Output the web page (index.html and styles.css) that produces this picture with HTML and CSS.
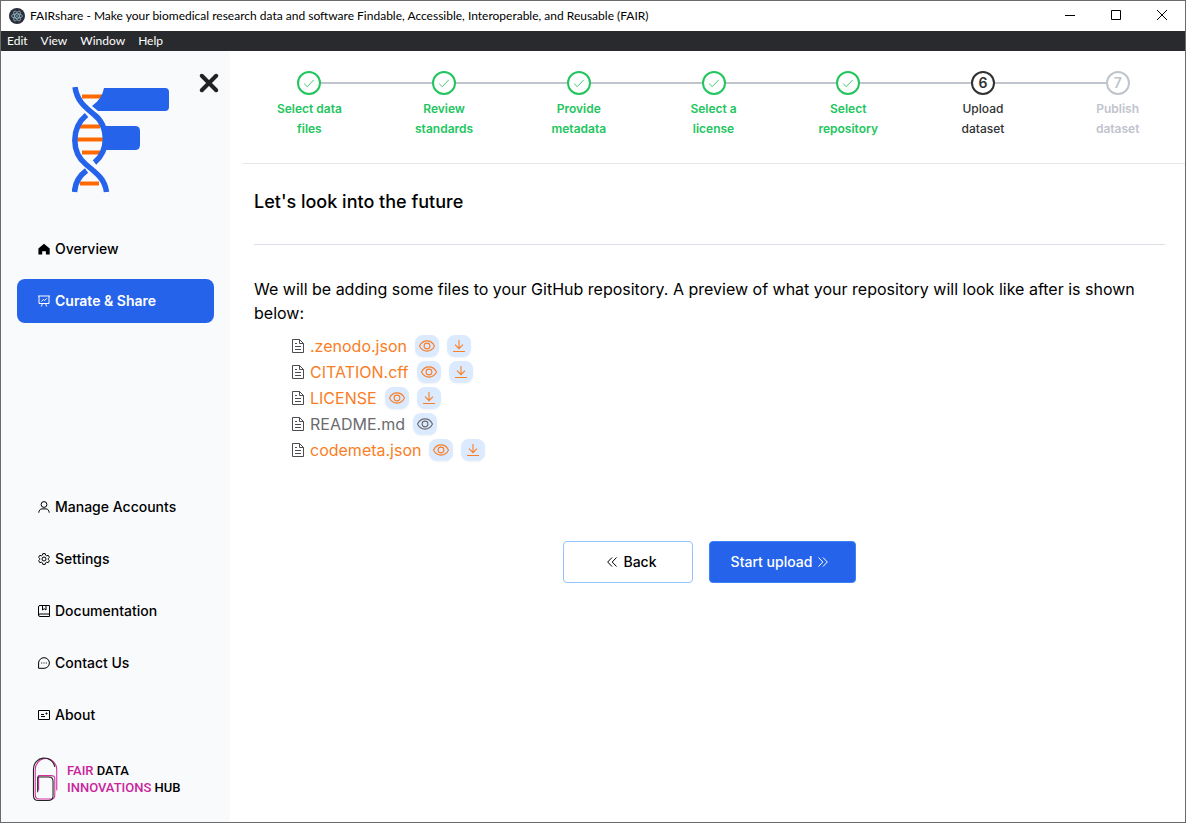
FILE: index.html
```html
<!DOCTYPE html>
<html lang="en">
<head>
<meta charset="utf-8">
<title>FAIRshare</title>
<link rel="stylesheet" href="styles.css">
</head>
<body>
<svg class="defs" aria-hidden="true">
  <symbol id="check" viewBox="0 0 16 16"><path d="M2.500 8.800 6 12.200 13.500 4.400" fill="none" stroke="currentColor"/></symbol>
  <symbol id="file" viewBox="0 0 14 16"><path d="M1.500 1.500h7l4 4v9h-11zM8.500 1.500v4h4M4 5.500h2M4 8.500h6M4 11.500h6" fill="none" stroke="currentColor"/></symbol>
  <symbol id="eye" viewBox="0 0 18 18"><path d="M1.500 9C3 6 5.800 3.900 9 3.900S15 6 16.500 9C15 12 12.200 14.100 9 14.100S3 12 1.500 9z" fill="none" stroke="currentColor" stroke-width="1.100"/><circle cx="9" cy="9" r="2.900" fill="none" stroke="currentColor" stroke-width="1.100"/></symbol>
  <symbol id="download" viewBox="0 0 18 18"><path d="M9 3v8.500M5 7.700l4 4 4-4M3 14.500h12" fill="none" stroke="currentColor" stroke-width="1.100"/></symbol>
</svg>
<div class="window">
  <header class="titlebar">
    <svg class="app-icon" viewBox="0 0 16 16"><circle cx="8" cy="8" r="8" fill="#2b2e3a"/><g fill="none" stroke="#9fc9d4" stroke-width=".7"><ellipse cx="8" cy="8" rx="5.500" ry="2.200"/><ellipse cx="8" cy="8" rx="5.500" ry="2.200" transform="rotate(60 8 8)"/><ellipse cx="8" cy="8" rx="5.500" ry="2.200" transform="rotate(120 8 8)"/></g><circle cx="8" cy="8" r=".8" fill="#9feaf9"/></svg>
    <span class="app-title">FAIRshare - Make your biomedical research data and software Findable, Accessible, Interoperable, and Reusable (FAIR)</span>
    <div class="window-controls">
      <button aria-label="Minimize"><svg viewBox="0 0 10 10"><path d="M0 5.500h10"/></svg></button>
      <button aria-label="Maximize"><svg viewBox="0 0 10 10"><path d="M.5.500h9v9h-9z"/></svg></button>
      <button aria-label="Close"><svg viewBox="0 0 10 10"><path d="M0 0l10 10M10 0L0 10"/></svg></button>
    </div>
  </header>
  <nav class="menubar" aria-label="Application menu">
    <button>Edit</button><button>View</button><button>Window</button><button>Help</button>
  </nav>
  <div class="body">
    <aside class="sidebar">
      <div class="brand">
        <svg class="logo" viewBox="0 0 98 106">
          <g stroke="#ff6a00" stroke-width="4"><path d="M10 9.500h22M7 39.500h21M5 52.500h29M10 65.500h20M8 96.500h19"/></g>
          <path d="M32 1h61q4 0 4 4v15q0 4-4 4H26l-6-5q10-7 12-18zM33 39h30q5 0 5 5v14q0 5-5 5H34z" fill="#2563eb"/>
          <g fill="none" stroke="#2563eb" stroke-width="5.500"><path d="M14.500 28C-1 41-1 65 14 77.500C27 88 33 93 34.500 105"/><path d="M3 0C5 14 13 20 22 27.500C37 39 37 64 22.500 75.500"/><path d="M14.500 83.500C7 89 3 96 2.500 105"/></g>
        </svg>
        <button class="collapse" aria-label="Close menu"><svg viewBox="0 0 20 20"><path d="M4 4l12 12M16 4L4 16" stroke="#222" stroke-width="3.400" stroke-linecap="round"/></svg></button>
      </div>
      <nav class="nav" aria-label="Main">
        <a href="#"><svg viewBox="0 0 12 12"><path d="M6 .7 11.700 5.500v6H7.900V8.200H4.200v3.300H.4v-6z" fill="currentColor" stroke="none"/></svg>Overview</a>
        <a href="#" class="active" aria-current="page"><svg viewBox="0 0 12 12"><path d="M0 1h12M1 1v7.500h10V1M3.500 6.500 5.300 4.500l1.300 1L8.800 3.300M3.300 11.500l1.200-3M8.700 11.500l-1.200-3"/></svg>Curate &amp; Share</a>
      </nav>
      <nav class="nav nav-bottom" aria-label="Secondary">
        <a href="#"><svg viewBox="0 0 12 12"><circle cx="6" cy="3.500" r="2.900"/><path d="M.8 11.700c0-2.200 1.400-3.800 3.200-3.800h4c1.800 0 3.200 1.600 3.200 3.800"/></svg>Manage Accounts</a>
        <a href="#"><svg viewBox="0 0 12 12"><circle cx="6" cy="6" r="2"/><path d="M4.800.6h2.400l.4 1.600 1 .6 1.600-.5 1.200 2.100L10.200 5.500v1l1.200 1.100-1.200 2.100-1.600-.5-1 .6-.4 1.600H4.800l-.4-1.600-1-.6-1.600.5L.6 7.600l1.200-1.100v-1L.6 4.400l1.200-2.100 1.600.5 1-.6z"/></svg>Settings</a>
        <a href="#"><svg viewBox="0 0 12 12"><path d="M11.500 9V.5H2Q.5.500.5 2v8q0 1.500 1.500 1.500h9.500V9H2Q.5 9 .5 10.200M4.500.5V5L6.200 3.700 8 5V.5"/></svg>Documentation</a>
        <a href="#"><svg viewBox="0 0 12 12"><path d="M.6 11.300V6a5.400 5.300 0 1 1 5.400 5.300z"/><path d="M3.200 6h1M5.500 6h1M7.800 6h1"/></svg>Contact Us</a>
        <a href="#"><svg viewBox="0 0 12 12"><path d="M.5 1.500h11v9H.5zM3 5.500h3M3 7.500h4M7.500 4.500h2M8.500 3.500v2"/></svg>About</a>
      </nav>
      <div class="hub">
        <svg viewBox="0 0 26 46"><g fill="none" stroke-width="1.100"><path d="M24.500 34V13a11 11.500 0 0 0-22 0v25q0 5 4 5h12q4 0 4-4V22q0-3-4-3H6v15" stroke="#d12f9e"/><path d="M22.500 10A11 11 0 0 0 .7 12v27q0 5.500 5 5.500h10q5 0 5-5V25q0-4.500-4.500-4.500H5V36" stroke="#222"/></g></svg>
        <p><span>FAIR</span> DATA<br><span>INNOVATIONS</span> HUB</p>
      </div>
    </aside>
    <main class="main">
      <ol class="steps">
        <li class="done"><span class="dot"><svg><use href="#check"/></svg></span><span class="label">Select data files</span></li>
        <li class="done"><span class="dot"><svg><use href="#check"/></svg></span><span class="label">Review standards</span></li>
        <li class="done"><span class="dot"><svg><use href="#check"/></svg></span><span class="label">Provide metadata</span></li>
        <li class="done"><span class="dot"><svg><use href="#check"/></svg></span><span class="label">Select a license</span></li>
        <li class="done"><span class="dot"><svg><use href="#check"/></svg></span><span class="label">Select repository</span></li>
        <li class="current" aria-current="step"><span class="dot">6</span><span class="label">Upload dataset</span></li>
        <li><span class="dot">7</span><span class="label">Publish dataset</span></li>
      </ol>
      <section class="content">
        <h1>Let's look into the future</h1>
        <p>We will be adding some files to your GitHub repository. A preview of what your repository will look like after is shown below:</p>
        <ul class="files">
          <li><svg class="file"><use href="#file"/></svg><span>.zenodo.json</span><button aria-label="Preview"><svg><use href="#eye"/></svg></button><button aria-label="Download"><svg><use href="#download"/></svg></button></li>
          <li><svg class="file"><use href="#file"/></svg><span>CITATION.cff</span><button aria-label="Preview"><svg><use href="#eye"/></svg></button><button aria-label="Download"><svg><use href="#download"/></svg></button></li>
          <li><svg class="file"><use href="#file"/></svg><span>LICENSE</span><button aria-label="Preview"><svg><use href="#eye"/></svg></button><button aria-label="Download"><svg><use href="#download"/></svg></button></li>
          <li class="existing"><svg class="file"><use href="#file"/></svg><span>README.md</span><button aria-label="Preview"><svg><use href="#eye"/></svg></button></li>
          <li><svg class="file"><use href="#file"/></svg><span>codemeta.json</span><button aria-label="Preview"><svg><use href="#eye"/></svg></button><button aria-label="Download"><svg><use href="#download"/></svg></button></li>
        </ul>
        <div class="actions">
          <button class="back"><svg viewBox="0 0 10 10"><path d="M5 .5.700 5 5 9.500M9.500.5 5.200 5l4.300 4.500"/></svg>Back</button>
          <button class="primary">Start upload<svg viewBox="0 0 10 10"><path d="M5 .5 9.300 5 5 9.500M.5.500 4.800 5 .5 9.500"/></svg></button>
        </div>
      </section>
    </main>
  </div>
</div>
</body>
</html>
```
FILE: styles.css
```css
* { box-sizing: border-box; }
body { margin: 0; background: #fff; color: #000; font: 16px/24px Inter, "Liberation Sans", sans-serif; }
button { font: inherit; color: inherit; border: 0; background: none; padding: 0; cursor: pointer; }
svg { display: block; flex: none; }
.defs { display: none; }
.window { display: flex; flex-direction: column; min-height: 100vh; border: 1px solid #6b6b6e; }

.titlebar { display: flex; align-items: center; height: 30px; padding-left: 8px; gap: 5px; font: 12px/16px Lato, "Noto Sans", sans-serif; }
.app-icon { width: 16px; height: 16px; }
.app-title { flex: 1; white-space: nowrap; overflow: hidden; }
.window-controls { display: flex; align-self: stretch; }
.window-controls button { display: grid; place-items: center; width: 46px; padding-bottom: 2px; }
.window-controls svg { width: 10px; height: 10px; fill: none; stroke: #000; overflow: visible; }
.menubar { display: flex; gap: 13px; height: 20px; padding: 0 6px; background: #292a2d; color: #fff; font: 12px/20px Lato, "Noto Sans", sans-serif; }

.body { display: flex; flex: 1; }
.sidebar { display: flex; flex-direction: column; flex: none; width: 229px; padding: 0 16px 20px; background: #f9fafc; }
.brand { display: flex; justify-content: space-between; align-items: flex-start; height: 176px; padding: 20px 0 0 55px; }
.logo { width: 98px; height: 106px; margin-top: 16px; }
.collapse { margin-right: -7px; }
.collapse svg { width: 24px; height: 24px; }
.nav { display: flex; flex-direction: column; gap: 8px; }
.nav-bottom { margin-top: auto; }
.nav a { display: flex; align-items: center; gap: 5px; height: 44px; padding-left: 21px; border-radius: 8px; color: #000; font-size: 14px; font-weight: 500; text-decoration: none; }
.nav svg { width: 12px; height: 12px; fill: none; stroke: currentColor; stroke-width: 1; }
.nav .active { background: #2563eb; color: #fff; font-weight: 600; }
.hub { display: flex; align-items: center; gap: 8px; margin: 20px 0 0 15px; }
.hub svg { width: 27px; height: 45px; }
.hub p { margin: 0; padding-bottom: 2px; font: 500 13px/17px Roboto, sans-serif; }
.hub span { color: #c9259a; }

.main { flex: 1; min-width: 0; padding-left: 12px; }
.steps { display: flex; list-style: none; margin: 0; padding: 20px 0 24px; border-bottom: 1px solid #e5e7eb; }
.steps li { position: relative; display: flex; flex: 1; flex-direction: column; align-items: center; gap: 4px; color: #c0c4cc; }
.steps li + li::before { content: ""; position: absolute; top: 11px; left: -50%; width: 100%; height: 2px; background: #c0c4cc; }
.dot { position: relative; z-index: 1; display: grid; place-items: center; width: 24px; height: 24px; border: 2px solid; border-radius: 50%; background: #fff; font-size: 14px; font-weight: 600; line-height: 20px; }
.dot svg { width: 14px; height: 14px; }
.label { width: 80px; text-align: center; font-size: 12px; font-weight: 600; line-height: 20px; }
.steps .done { color: #22c55e; }
.steps .current { color: #303133; }
.steps .current .label { font-weight: 500; }

.content { padding: 24px 20px 24px 12px; }
h1 { margin: 0 0 32px; padding-bottom: 28px; border-bottom: 1px solid #dcdfe6; font-size: 18px; font-weight: 500; line-height: 28px; }
.content p { margin: 0; }
.files { display: flex; flex-direction: column; gap: 2px; list-style: none; margin: 9px 0 0; padding: 0 0 0 37px; }
.files li { display: flex; align-items: center; gap: 8px; color: #f97e26; }
.files .file { width: 14px; height: 16px; margin-right: -3px; color: #4b4b50; }
.files button { display: grid; place-items: center; width: 24px; height: 22px; border-radius: 8px; background: #dbeafe; box-shadow: 0 1px 2px #0000000d; }
.files button svg { width: 18px; height: 18px; }
.files .existing { color: #6b6b70; }
.actions { display: flex; justify-content: center; gap: 16px; margin-top: 79px; font-size: 14px; font-weight: 500; }
.actions button { display: flex; align-items: center; justify-content: center; gap: 6px; height: 42px; border-radius: 4px; }
.actions svg { width: 10px; height: 10px; fill: none; stroke: currentColor; }
.actions .back { width: 130px; padding-left: 8px; border: 1px solid #93c5fd; }
.actions .primary { width: 147px; padding-right: 6px; border: 1px solid #3b82f6; background: #2563eb; color: #fff; }
```
